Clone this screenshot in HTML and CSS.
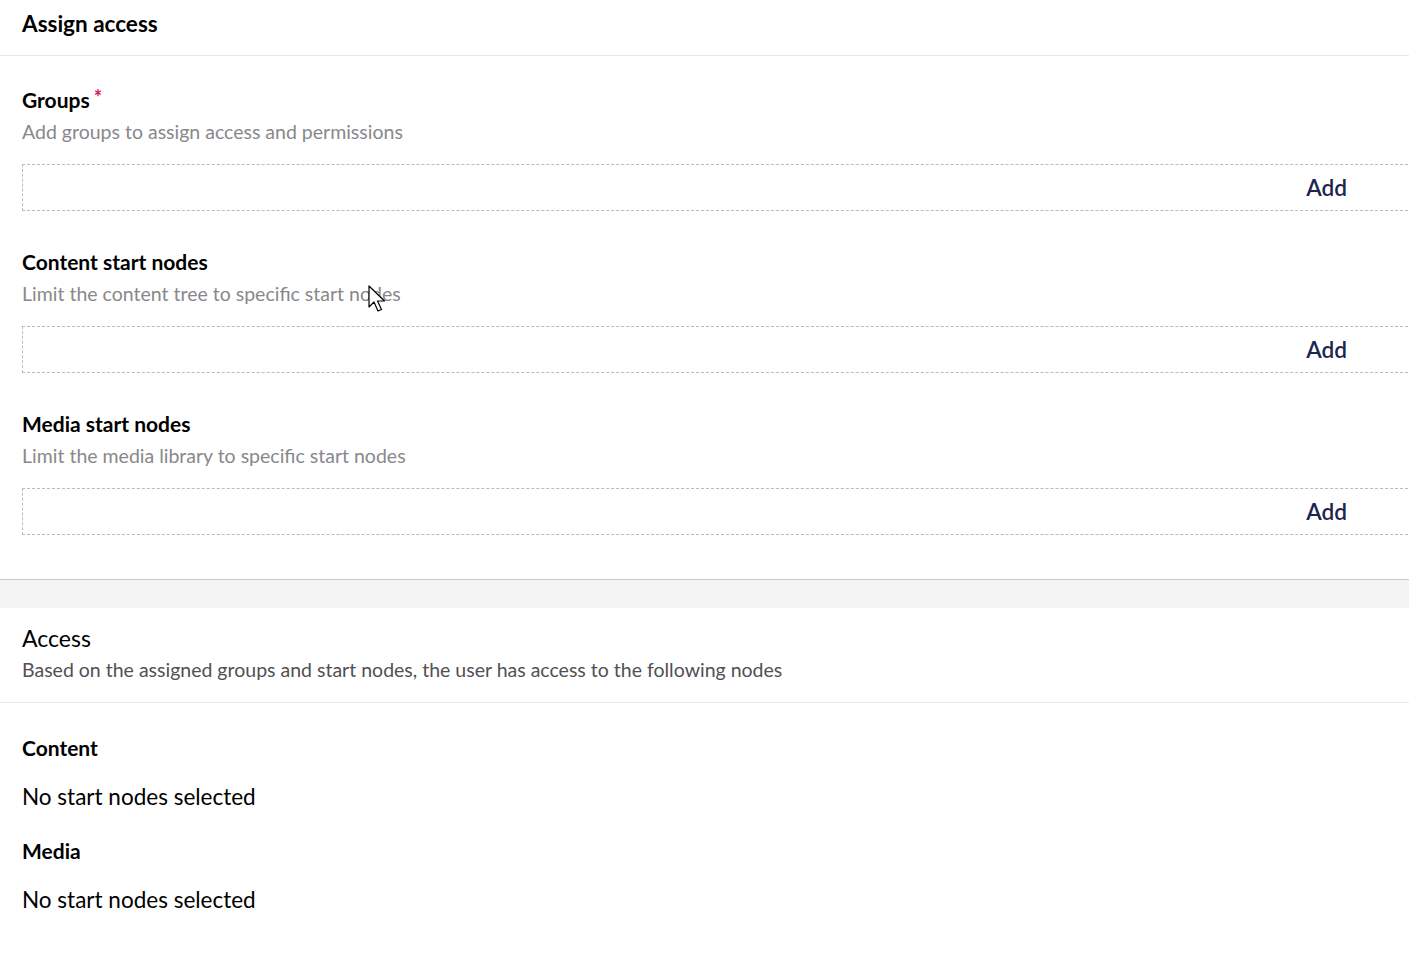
FILE: index.html
```html
<!DOCTYPE html>
<html lang="en">
<head>
<meta charset="utf-8">
<title>Assign access</title>
<link rel="stylesheet" href="styles.css">
</head>
<body>
<div class="page">
  <section class="panel">
    <header class="panel-header">
      <h2 class="panel-title">Assign access</h2>
    </header>
    <div class="panel-body fields">
      <div class="field">
        <div class="label">Groups <span class="req">*</span></div>
        <div class="desc">Add groups to assign access and permissions</div>
        <div class="picker"><button class="add">Add</button></div>
      </div>
      <div class="field">
        <div class="label">Content start nodes</div>
        <div class="desc">Limit the content tree to specific start nodes</div>
        <div class="picker"><button class="add">Add</button></div>
      </div>
      <div class="field">
        <div class="label">Media start nodes</div>
        <div class="desc">Limit the media library to specific start nodes</div>
        <div class="picker"><button class="add">Add</button></div>
      </div>
    </div>
  </section>
  <div class="spacer"></div>
  <section class="panel plain">
    <header class="panel-header access-header">
      <h2 class="access-title">Access</h2>
      <div class="access-desc">Based on the assigned groups and start nodes, the user has access to the following nodes</div>
    </header>
    <div class="panel-body access-body">
      <div class="sub-label">Content</div>
      <div class="empty">No start nodes selected</div>
      <div class="sub-label media">Media</div>
      <div class="empty">No start nodes selected</div>
    </div>
  </section>
</div>
<svg class="cursor" width="20" height="30" viewBox="0 0 20 30" xmlns="http://www.w3.org/2000/svg">
  <path d="M1 1 L1 22 L6 17 L10 26 L13.5 24.5 L9.5 16 L16.5 16 Z" fill="#fff" stroke="#000" stroke-width="1.2" stroke-linejoin="round"/>
</svg>
</body>
</html>
```
FILE: styles.css
```css
html, body {
  margin: 0;
  padding: 0;
  overflow: hidden;
  background: #ffffff;
}
body {
  font-family: Lato, "Open Sans", sans-serif;
  color: #000000;
  position: relative;
}
.page {
  width: 1460px;
}
.panel {
  background: #ffffff;
  border-bottom: 1px solid #c9c9cc;
  box-shadow: 0 1px 1px rgba(0, 0, 0, 0.08);
}
.panel.plain {
  border-bottom: 0;
  box-shadow: none;
}
.panel-header {
  padding: 10px 22px 17px;
  border-bottom: 1px solid #e9e9eb;
}
.panel-title {
  margin: 0;
  font-size: 22.5px;
  line-height: 28px;
  font-weight: 700;
}
.panel-body {
  padding: 27px 22px 44px;
}
.fields {
  display: flex;
  flex-direction: column;
  gap: 37px;
}
.field {
  display: flex;
  flex-direction: column;
}
.label {
  font-size: 21px;
  line-height: 28px;
  font-weight: 700;
}
.req {
  color: #d42054;
  font-size: 20px;
  vertical-align: 3px;
  font-weight: 700;
  margin-left: -1px;
}
.desc {
  margin-top: 4px;
  font-size: 19.5px;
  line-height: 28px;
  color: #88888c;
}
.picker {
  margin-top: 18px;
  height: 45px;
  border: 1px dashed #bbbbbb;
  display: flex;
  align-items: center;
  justify-content: flex-end;
}
.add {
  border: 0;
  background: transparent;
  font-family: Lato, "Open Sans", sans-serif;
  font-size: 22.6px;
  font-weight: 600;
  color: #1b264f;
  padding: 0 90px 0 20px;
  line-height: 45px;
}
.spacer {
  height: 28px;
  background: #f5f4f5;
}
.access-header {
  padding: 16px 22px 18px;
}
.access-title {
  margin: 0;
  font-size: 23px;
  line-height: 28px;
  font-weight: 400;
  color: #000000;
}
.access-desc {
  margin-top: 4px;
  font-size: 19.5px;
  line-height: 28px;
  color: #515054;
}
.access-body {
  padding: 31px 22px 40px;
}
.sub-label {
  font-size: 21px;
  line-height: 28px;
  font-weight: 700;
}
.sub-label.media {
  margin-top: 25px;
}
.empty {
  margin-top: 20px;
  font-size: 22.5px;
  line-height: 30px;
}
.cursor {
  position: absolute;
  left: 368px;
  top: 285px;
}
```
